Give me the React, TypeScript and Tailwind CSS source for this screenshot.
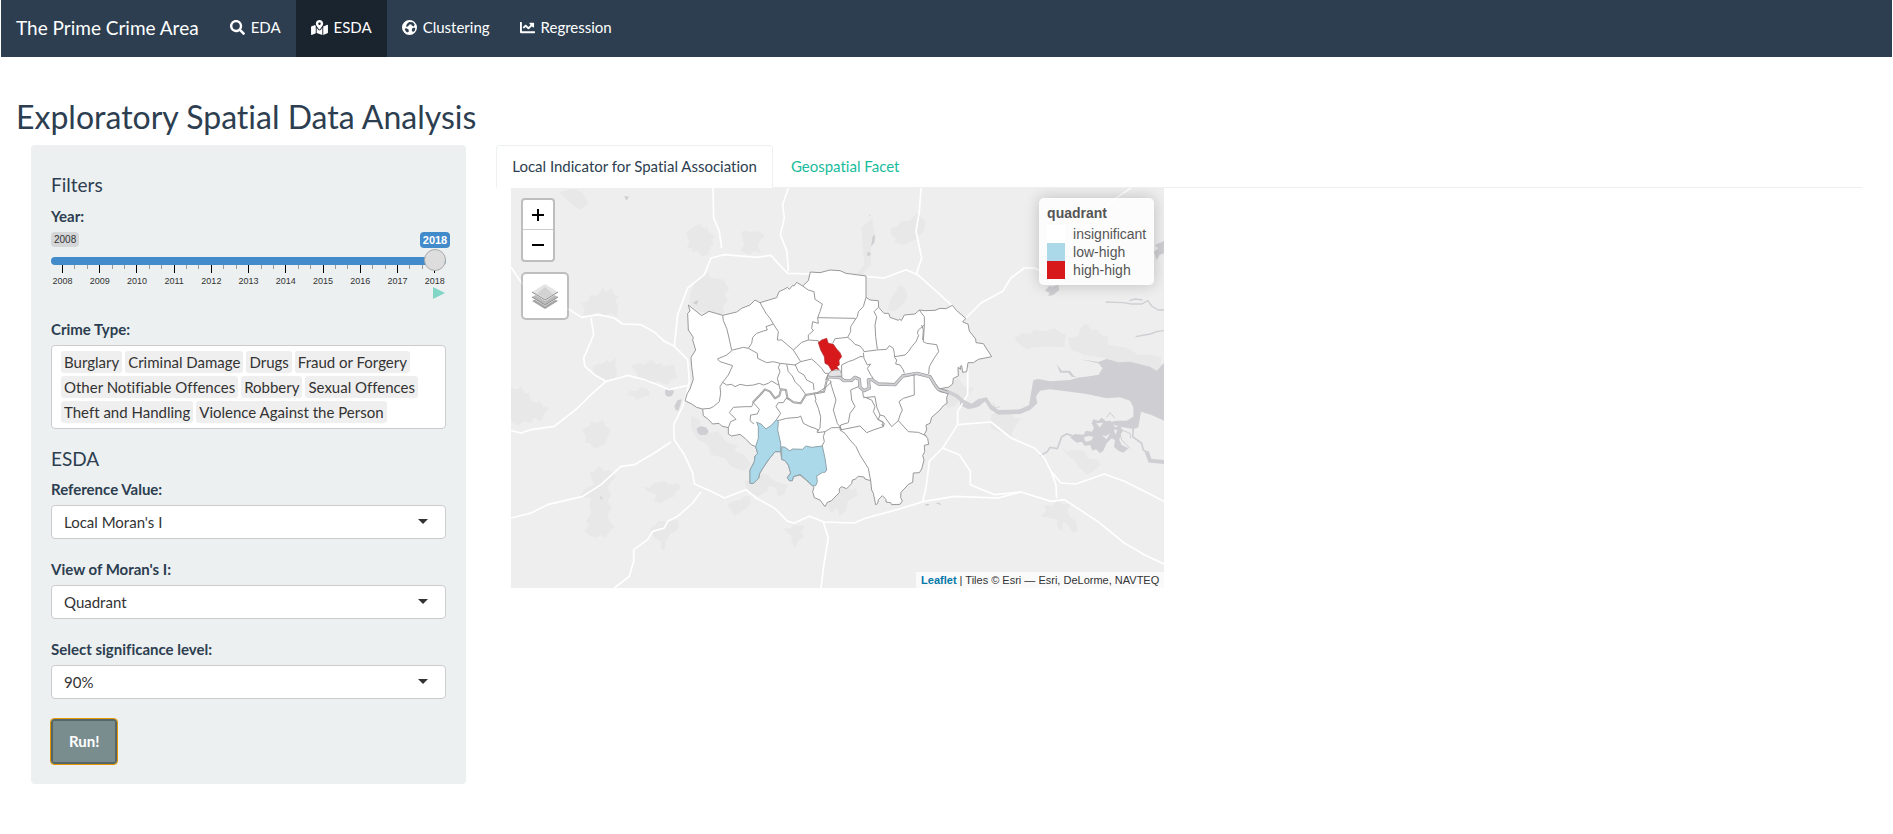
import { useState } from 'react'
import { FaChartLine, FaMapMarkedAlt, FaSearch } from 'react-icons/fa'

function GlobeIcon({ className }: { className?: string }) {
  return (
    <svg viewBox="0 0 46 46" fill="currentColor" fillRule="evenodd" className={className} aria-hidden="true">
      <path d="M23 0A23 23 0 1 1 23 46 23 23 0 0 1 23 0ZM12 20 15 12 22 6 33 7 39 14 36 20 30 17 28 13 23 14 20 18 16 21ZM8 27 14 25 20 29 21 35 16 38 11 34ZM31 26 37 23 41 26 39 33 34 37 30 33Z" />
    </svg>
  )
}

const NAV_ITEMS = [
  { label: 'EDA', icon: FaSearch, iconClass: 'w-[15px]' },
  { label: 'ESDA', icon: FaMapMarkedAlt, iconClass: 'w-[17px]' },
  { label: 'Clustering', icon: GlobeIcon, iconClass: 'w-[15px]' },
  { label: 'Regression', icon: FaChartLine, iconClass: 'w-[15px]' },
]

const YEARS = [2008, 2009, 2010, 2011, 2012, 2013, 2014, 2015, 2016, 2017, 2018]

const CRIME_TYPES = [
  'Burglary', 'Criminal Damage', 'Drugs', 'Fraud or Forgery', 'Other Notifiable Offences',
  'Robbery', 'Sexual Offences', 'Theft and Handling', 'Violence Against the Person',
]

const LEGEND = [
  { label: 'insignificant', swatch: 'bg-white' },
  { label: 'low-high', swatch: 'bg-[#abd9e9]' },
  { label: 'high-high', swatch: 'bg-[#d7191c]' },
]

// Map geometry, three units per pixel
const URBAN = [
  'M145 12 190 2 215 15 232 45 208 65 185 52Z',
  'M525 135 545 118 568 108 575 120 590 118 590 130 612 145 600 155 608 165 600 175 590 200 572 205 560 190 545 192 540 180 528 180 535 160Z',
  'M690 132 700 128 720 132 745 130 762 145 750 152 742 170 745 185 752 195 730 190 715 200 700 195 690 185 700 170Z',
  'M210 345 230 340 240 320 260 325 275 300 285 315 300 300 310 320 325 325 312 340 320 350 320 365 318 388 300 375 280 382 260 372 240 385 215 380 222 365Z',
  'M245 535 265 525 270 530 290 515 295 525 318 508 312 530 318 550 310 575 300 570 290 580 270 570 250 560Z',
  'M360 535 385 525 400 530 420 515 435 530 450 525 455 535 490 530 490 545 500 570 480 575 470 590 440 580 415 585 380 572 375 550Z',
  'M0 600 20 605 30 595 40 615 55 615 60 640 80 645 85 635 95 655 115 660 100 675 90 700 70 690 60 705 40 700 20 712 0 700Z',
  'M212 725 235 715 240 700 260 705 275 695 285 715 298 725 290 745 285 765 265 778 250 780 235 765 222 765 225 745Z',
  'M355 610 380 608 385 598 405 600 415 610 415 625 400 625 375 637 370 625 350 622Z',
  'M235 855 250 850 265 835 280 850 295 845 315 865 300 880 290 900 300 920 290 940 302 960 290 980 295 1000 310 1015 295 1030 285 1050 270 1040 255 1050 240 1045 220 1030 235 1010 225 1000 240 975 235 950 240 930 205 925 225 900 250 890Z',
  'M395 895 415 900 430 885 460 880 475 890 500 885 510 900 495 910 490 925 465 935 450 945 430 940 435 920 410 910Z',
  'M415 1020 430 1015 440 1000 470 1000 500 995 505 1015 495 1030 480 1035 465 1060 460 1090 450 1080 450 1060 430 1050Z',
  'M1140 120 1160 115 1170 100 1195 98 1220 75 1230 90 1245 100 1240 130 1225 140 1215 155 1200 160 1185 170 1150 165 1155 150 1140 140Z',
  'M1050 120 1085 90 1085 110 1095 150 1080 180 1080 230 1060 250 1050 340 1042 320 1045 290 1010 270 1000 260 1040 255 1060 230 1055 170Z',
  'M540 315 550 285 590 255 600 270 640 275 645 290 655 300 640 320 650 340 635 355 640 375 620 390 600 375 560 370 535 345Z',
  'M1130 365 1140 330 1155 310 1165 290 1180 300 1190 325 1180 345 1150 370Z',
  'M1510 450 1535 435 1560 438 1570 425 1600 430 1630 420 1645 432 1665 440 1660 478 1610 475 1560 480 1550 485 1520 465Z',
  'M1670 450 1700 445 1710 420 1725 405 1740 425 1760 425 1770 440 1790 445 1790 470 1850 480 1880 500 1920 500 1950 510 1950 545 1900 545 1850 540 1780 510 1720 500 1680 485Z',
  'M1310 660 1330 655 1345 640 1370 625 1390 600 1360 595 1340 570 1290 620 1300 640Z',
  'M1440 680 1460 672 1500 675 1510 690 1530 690 1510 720 1500 745 1460 730 1440 720Z',
  'M1650 780 1670 790 1690 785 1720 790 1730 810 1755 815 1770 830 1730 850 1700 835 1690 815 1680 810Z',
  'M540 680 570 700 560 720 600 735 620 730 650 765 680 770 670 790 700 800 720 830 700 850 660 835 640 810 600 800 590 770 560 755 540 720Z',
  'M730 850 770 860 790 880 830 890 820 920 800 925 795 900 765 890 750 910 735 890Z',
  'M650 950 665 940 690 935 700 925 715 925 720 945 700 965 670 985Z',
  'M700 880 740 870 770 890 770 910 740 925 710 910Z',
  'M940 940 965 930 980 900 1010 890 1020 910 1035 900 1040 920 1010 940 1005 970 985 985 980 960 960 975Z',
  'M815 1020 840 1022 850 1010 880 1015 870 1035 880 1045 860 1060 855 1080 840 1060 845 1045 830 1035Z',
  'M1590 985 1605 970 1600 950 1625 955 1640 935 1655 950 1680 945 1670 965 1675 985 1695 1000 1700 1030 1685 1035 1670 1010 1655 1000 1655 1030 1640 1020 1640 995Z',
  'M1690 815 1760 815 1760 840 1730 860 1705 840Z',
]

const ROADS = [
  'M0 238 32 285 175 365 212 388 260 380 310 390 335 408 390 410 430 432 460 460 490 475 530 515 535 580 525 625 515 655 488 710 490 755 520 800 545 855 550 888 600 910 640 930 705 905 735 930 790 960 830 1000 850 1005 895 985 940 1002 1030 1005 1065 990 1140 970 1240 940 1330 925 1460 930 1530 912 1620 940 1660 935 1760 1000 1840 1065 1900 1100 1959 1128',
  'M240 390 248 440 218 510 222 535 250 560 285 580 325 570 350 562 400 575 440 590 475 605 530 592',
  'M285 580 240 620 200 660 130 715 60 725 30 735 0 728',
  'M0 990 60 975 110 950 215 925 270 890 330 835 370 830 430 795 480 762',
  'M570 912 545 945 500 985 470 1000 460 1020 425 1030 410 1055 368 1085 368 1120 355 1165 310 1200',
  'M606 0 608 90 625 130 632 180M832 0 815 50 820 90 808 140 828 190 832 250',
  'M490 475 500 380 530 300 580 260 600 210 640 200 740 208 780 202 800 225 830 256 905 258 1025 262 1060 265 1120 270 1185 245 1220 260 1265 300 1320 350 1322 365',
  'M1230 0 1225 70 1215 130 1232 210 1215 262',
  'M1365 390 1410 345 1475 310 1500 270 1540 240 1570 240 1610 262 1680 200 1740 90 1830 20 1860 0',
  'M1370 540 1370 620 1340 670 1340 710 1295 780 1255 820 1245 900 1235 940',
  'M1340 710 1440 702 1500 750 1570 780 1600 810 1620 850 1650 885 1695 888 1780 858 1840 880 1900 910 1959 940',
  'M1295 780 1345 800 1378 850 1378 890 1450 920 1530 912M1620 850 1635 890 1637 930',
  'M937 1002 952 1050 940 1120 930 1200',
]

const OUTLINE =
  'M85 165 125 197 147 184 188 196 230 186 245 175 270 165 285 150 300 158 350 143 357 125 372 118 382 112 388 118 398 106 402 108 410 97 428 108 445 92 451 66 480 68 510 60 540 62 558 70 618 78 618 142 630 150 655 152 656 172 672 190 686 190 690 202 715 211 719 207 724 212 733 195 765 192 778 180 795 182 825 181 840 175 858 176 877 166 890 182 917 205 908 216 924 222 928 243 947 267 948 278 970 281 995 320 955 328 940 338 924 338 920 365 908 367 905 347 900 350 902 358 894 352 895 378 880 385 878 402 865 412 832 417 840 425 865 430 860 442 861 460 850 467 840 480 825 493 815 502 810 520 798 525 800 540 793 553 803 565 806 583 793 586 794 605 788 617 792 630 785 657 778 668 760 669 758 697 745 703 738 711 723 727 722 742 727 753 720 763 695 764 692 758 678 756 678 748 667 737 655 749 653 761 647 764 640 730 635 720 632 692 615 687 612 681 595 679 585 688 577 690 575 701 560 716 545 710 538 716 538 728 520 746 515 752 502 757 495 770 480 750 463 743 458 725 462 712 458 708 440 692 420 675 400 680 397 692 388 692 382 683 392 668 385 645 375 632 365 628 362 605 345 605 325 630 310 652 298 672 296 685 280 700 270 700 270 660 283 635 285 618 293 610 287 590 275 585 255 565 240 553 215 558 205 552 205 533 185 528 177 520 158 522 145 508 130 497 128 477 110 472 95 462 75 452 82 430 90 417 100 388 95 350 93 322 107 300 98 270 100 262 85 240 83 190 90 183Z'

const BORDERS = [
  'M188 196 190 212 200 235 205 255 215 300',
  'M172 327 200 315 218 300 250 292 265 295 275 280 278 262 290 250 310 243 322 240 318 230 340 222',
  'M300 158 318 190 330 205 340 222 355 245 352 270 365 270 400 300 422 335 405 345 360 340 340 335 320 338 293 325 292 310 265 295',
  'M172 327 180 335 218 347 205 375 188 397 180 410 182 430 178 455 160 470 150 475 128 477',
  'M188 397 200 405 215 403 225 410 240 403 260 407 280 405 298 400 310 405 325 400 335 393 350 402 357 405M360 342 355 352 360 365 352 385 357 405 360 418',
  'M428 108 445 120 462 125 465 148 487 162 480 185 473 203 475 220 458 215 455 235 460 242 445 255 445 270 425 277 400 300',
  'M473 203 585 205 587 210M618 142 610 170 595 185 592 200 585 210 572 230 572 245 563 262 575 272 585 283 600 288 610 300 612 305',
  'M445 270 475 272 480 285M563 262 525 266 518 280',
  'M655 172 642 185 650 200 645 225 647 260 652 298',
  'M612 305 650 300 680 298 688 287 700 295 703 310 704 322 710 330 707 342 720 345 730 360 733 370',
  'M778 180 785 190 793 200 793 225 775 240 772 250 776 256 768 275 755 290 745 305 735 315 704 320',
  'M793 225 790 275 800 280 830 284 836 305 822 325 808 350 806 372',
  'M785 225 790 240 788 270',
  'M610 308 612 325 622 345 632 342 622 355 632 375 640 385M545 382 545 345 565 335 580 330 600 320 610 320',
  'M422 335 455 327 470 340 485 355 495 370 505 370M380 343 385 365 397 378 405 395 420 410 437 433',
  'M405 343 415 365 432 375 440 390 460 400 462 420M515 362 505 370 500 390M470 430 500 410 515 395',
  'M205 533 212 515 228 508 208 488 220 472 255 470 275 470 280 458 298 478 292 492 272 495 270 512 282 522',
  'M353 512 380 505 415 502 422 498 430 520 450 530 465 535 475 540 472 548 495 545 490 560 493 575 485 590',
  'M350 508 362 490 348 470 355 458 370 458 378 445 388 448M465 450 475 475 482 500 480 535 470 545M463 430 468 450',
  'M510 390 515 410 528 450 520 480 532 520 545 538M495 545 515 533 540 533 545 540',
  'M595 410 572 420 575 450 585 470 570 490 565 518 542 525 540 540 600 528 620 548 645 538 670 530 668 515 655 510 640 485 645 470 635 450 610 440 608 425',
  'M610 443 645 440 650 470 660 495 672 498 695 530 715 512 720 495 727 480 717 455 730 445 763 435 762 372',
  'M715 512 745 545 775 547 800 558M540 540 555 550 570 570 588 590 600 615 625 655 632 692',
  'M660 495 655 508 673 520 670 530 665 522',
]

const THAMES_WEST =
  'M278 458 300 435 315 418 330 425 345 445 358 437 363 418 378 420 382 443 400 457 422 460 437 435 492 425 500 392'

const THAMES_EAST =
  'M500 392 505 380 540 383 552 392 575 391 585 382 598 388 600 412 612 422 628 415 625 390 635 388 655 402 705 404 728 378 770 370 810 380 825 405 835 418 864 427'

function LondonMap() {
  return (
    <svg viewBox="0 0 1959 1200" className="block w-full bg-[#eeeeee]" role="img" aria-label="London boroughs">
      <g fill="#e8e8e8">
        {URBAN.map((d) => <path key={d} d={d} />)}
      </g>

      {/* estuary, marshes and reservoirs */}
      <g transform="translate(1347 -24)" fill="#cfced3" stroke="none">
        <path d="M0 662 25 678 55 657 80 652 95 675 115 690 180 688 207 675 213 640 220 600 235 597 270 604 330 600 350 594 415 585 428 565 415 550 360 538 415 546 440 537 475 547 510 545 570 560 590 572 612 548V722L575 705 543 695 535 742 520 747 480 740 440 728 470 722 500 722 520 710 520 682 510 662 480 652 440 655 380 642 330 635 270 628 240 632 228 650 232 670 210 690 180 702 115 704 90 688 75 664 50 682 25 688 0 675Z" />
        <path d="M415 585 380 592 335 590 325 578 300 578 290 553 305 572 330 572 340 586 350 592 415 592Z" />
        <path fillRule="evenodd" d="M330 772 345 762 370 764 378 752 395 755 402 745 395 730 400 718 415 722 425 713 438 724 452 722 465 742 480 738 490 752 482 762 478 780 485 795 505 805 490 818 475 812 462 800 465 780 455 775 440 790 430 812 420 820 408 808 398 812 390 795 375 798 365 785 350 788ZM372 772 385 768 400 770 395 780 382 785 375 783ZM425 765 438 768 450 760 440 778ZM408 730 430 728 420 742ZM462 748 472 750 466 765Z" />
        <path d="M582 215 595 205 585 195 612 183V220L598 225 590 240ZM255 332 268 318 275 320 295 315 298 330 280 345 265 348 268 338Z" />
        <g fill="none" stroke="#cfced3" strokeWidth="5">
          <path d="M437 366 490 368 515 372 545 372 563 362 575 378 595 390 612 390M508 362 525 357 548 360M527 470 570 462 590 455 612 452" strokeWidth="4" />
          <path d="M240 827 262 815 270 802 292 806 305 770 320 762 345 770" />
          <path d="M520 745 518 770 545 790 550 810 565 820" />
          <path d="M560 815 570 842 612 846" strokeWidth="12" />
          <path d="M490 752 510 760 512 775M440 712 450 698 465 715M475 740 485 780 510 805" strokeWidth="3" />
          <path d="M100 670 106 684 120 680" strokeWidth="2" />
        </g>
      </g>
      <g fill="#cfced3">
        <path d="M462 608 468 602 485 602 489 612 482 624 470 626 463 620ZM490 654 500 636 512 634 508 650 502 668 494 666ZM557 722 568 714 585 718 593 730 586 740 568 741 560 734Z" />
        <path d="M1085 145 1092 140 1090 165 1080 175ZM1070 192 1080 195 1075 205 1068 202ZM1072 78 1080 84 1076 84ZM340 24 354 26 346 38ZM267 922 275 932 270 935ZM545 345 562 335 558 350ZM1240 948 1256 948 1250 954ZM1273 945 1286 944 1290 952Z" />
      </g>

      <g fill="none" stroke="#fff" strokeWidth="5" strokeLinejoin="round">
        {ROADS.map((d) => <path key={d} d={d} />)}
      </g>

      {/* boroughs */}
      <g transform="translate(447 186)" strokeLinejoin="round">
        <path d="M845 420 870 428 890 438 910 455 938 469 955 464 970 450" fill="none" stroke="#cfced3" strokeWidth="11" />
        <path d={OUTLINE} fill="#fff" stroke="#999" strokeWidth="3" />
        <path d={THAMES_WEST} fill="none" stroke="#999" strokeWidth="6" />
        <path d={THAMES_WEST} fill="none" stroke="#cfced3" strokeWidth="2" />
        <path d={THAMES_EAST} fill="none" stroke="#999" strokeWidth="10" />
        <path d={THAMES_EAST} fill="none" stroke="#cfced3" strokeWidth="6" />
        <g fill="none" stroke="#999" strokeWidth="3">
          {BORDERS.map((d) => <path key={d} d={d} />)}
        </g>
        <path d="M505 372 515 362 540 360 546 378 508 380Z" fill="#e4e4e6" stroke="#999" strokeWidth="2" />
        <g stroke="#8fa3ab" strokeWidth="3">
          <path fill="#abd9e9" d="M290 517 303 522 318 537 335 525 350 508 355 515 353 540 362 580 362 605 345 605 325 630 310 652 298 672 296 685 280 700 270 700 270 660 283 635 285 618 293 610 287 590 295 565 295 530Z" />
          <path fill="#abd9e9" d="M365 590 375 592 390 603 397 597 428 598 437 588 455 592 487 588 495 625 500 660 495 667 488 667 470 678 472 695 467 707 458 708 440 690 420 673 400 680 397 692 388 692 382 682 392 670 385 645 375 632 365 628Z" />
        </g>
        <path fill="#d7191c" stroke="#b0272a" strokeWidth="2" d="M475 278 485 270 500 265 505 280 520 283 530 297 540 308 545 320 537 330 538 345 530 350 537 358 527 357 515 362 505 345 495 340 493 320 482 300Z" />
      </g>
    </svg>
  )
}

function SelectField({ id, label, options }: { id: string; label: string; options: string[] }) {
  return (
    <div className="mb-5">
      <label htmlFor={id} className="mb-[5px] block font-bold">{label}</label>
      <div className="relative">
        <select
          id={id}
          className="block h-[34px] w-full appearance-none rounded border border-[#cccccc] bg-white px-3 text-[#333333]"
        >
          {options.map((option) => <option key={option}>{option}</option>)}
        </select>
        <span className="pointer-events-none absolute top-[14px] right-[18px] border-x-5 border-t-5 border-x-transparent border-t-[#333333]" />
      </div>
    </div>
  )
}

function YearSlider() {
  const [year, setYear] = useState(2018)

  return (
    <div className="mb-5 font-['Liberation_Sans',sans-serif]">
      <div className="-mr-1 flex items-start justify-between text-[10px] leading-[16px]">
        <span className="rounded bg-[#d4d6d7] px-[3px] leading-[15px] text-[#333333]">2008</span>
        <output htmlFor="year" className="rounded bg-[#428bca] px-[3px] text-[11px] font-bold text-white">{year}</output>
      </div>
      <input
        id="year"
        type="range"
        min={2008}
        max={2018}
        value={year}
        onChange={(e) => setYear(Number(e.target.value))}
        className="relative z-10 mt-0.5 block h-[22px] w-full appearance-none bg-transparent [&::-webkit-slider-runnable-track]:h-2 [&::-webkit-slider-runnable-track]:rounded [&::-webkit-slider-runnable-track]:bg-[#428bca] [&::-webkit-slider-thumb]:-mt-2 [&::-webkit-slider-thumb]:size-[22px] [&::-webkit-slider-thumb]:appearance-none [&::-webkit-slider-thumb]:rounded-full [&::-webkit-slider-thumb]:border [&::-webkit-slider-thumb]:border-[#aaaaaa] [&::-webkit-slider-thumb]:bg-[#dddddd]"
      />
      <div className="-mt-[7px] flex h-2 justify-between px-[11px]">
        {Array.from({ length: 31 }, (_, i) => (
          <span key={i} className={i % 3 === 0 ? 'h-2 w-px bg-black' : 'h-1 w-px bg-[#999999]'} />
        ))}
      </div>
      <div className="mt-[3px] flex justify-between px-[11px] text-[9px] leading-[11px] text-[#333333]">
        {YEARS.map((y) => (
          <span key={y} className="flex w-px justify-center">{y}</span>
        ))}
      </div>
      <button
        aria-label="Play"
        className="mr-px ml-auto block border-y-[6px] border-l-[12px] border-y-transparent border-l-[#82d6c6]"
      />
    </div>
  )
}

function LayersIcon() {
  return (
    <svg viewBox="0 0 26 26" className="size-[26px]">
      <path d="M13 11 26 18 13 26 0 18Z" fill="#a6a6a6" />
      <path d="M13 8 26 15 13 23 0 15Z" fill="#fff" />
      <path d="M13 7 26 14 13 22 0 14Z" fill="#b9b9b9" />
      <path d="M0 14 13 22 26 14" fill="none" stroke="#8c8c8c" />
      <path d="M13 2 26 10 13 18 0 10Z" fill="#fff" />
      <path d="M13 1 26 9 13 17 0 9Z" fill="#e4e4e4" />
      <path d="M13 4 21 11 13 16 5 11Z" fill="#d2d2d2" />
      <path d="M0 9 13 17 26 9" fill="none" stroke="#8c8c8c" />
    </svg>
  )
}

function MapPanel() {
  return (
    <div className="relative w-full max-w-[653px] overflow-hidden font-['Liberation_Sans',sans-serif]">
      <LondonMap />

      {/* Map controls */}
      <div className="absolute top-[10px] left-[10px] flex flex-col items-start gap-[10px]">
        <div className="flex flex-col rounded border-2 border-black/20 bg-white bg-clip-padding text-black">
          <button aria-label="Zoom in" className="flex h-[30px] w-[30px] items-center justify-center border-b border-[#cccccc]">
            <svg viewBox="0 0 12 12" className="size-3"><path d="M6 0V12M0 6H12" stroke="currentColor" strokeWidth="2" /></svg>
          </button>
          <button aria-label="Zoom out" className="flex h-[30px] w-[30px] items-center justify-center">
            <svg viewBox="0 0 12 12" className="size-3"><path d="M0 6H12" stroke="currentColor" strokeWidth="2" /></svg>
          </button>
        </div>
        <button aria-label="Layers" className="flex size-12 items-center justify-center rounded-[5px] border-2 border-black/20 bg-white bg-clip-padding">
          <LayersIcon />
        </button>
      </div>

      <div className="absolute top-[10px] right-[10px] rounded-[5px] bg-white/80 px-2 py-1.5 text-sm leading-[18px] text-[#555555] shadow-[0_0_15px_rgba(0,0,0,0.2)]">
        <p className="mb-[3px] font-bold">quadrant</p>
        <ul>
          {LEGEND.map(({ label, swatch }) => (
            <li key={label} className="flex gap-2">
              <span className={`size-[18px] ${swatch}`} />
              {label}
            </li>
          ))}
        </ul>
      </div>

      <p className="absolute right-0 bottom-0 bg-white/70 px-[5px] text-[11px] leading-[16px] text-[#333333]">
        <a href="#leaflet" className="font-bold text-[#0078a8]">Leaflet</a> | Tiles © Esri — Esri, DeLorme, NAVTEQ
      </p>
    </div>
  )
}

export default function App() {
  return (
    <div className="font-[Lato,sans-serif] text-[15px] leading-[21px] text-[#2c3e50] [font-variant-ligatures:none]">
      <nav className="mx-px flex gap-px bg-[#2c3e50] text-white">
        <a href="#home" className="px-[15px] pt-[18px] pb-[19px] text-[19px] leading-[20px]">The Prime Crime Area</a>
        <ul className="flex">
          {NAV_ITEMS.map(({ label, icon: Icon, iconClass }) => (
            <li key={label}>
              <a
                href={`#${label.toLowerCase()}`}
                className={`flex h-full items-center gap-1.5 px-[15px] pb-[3px] ${label === 'ESDA' ? 'bg-[#1a242f]' : ''}`}
              >
                <Icon className={`h-[15px] ${iconClass}`} />
                {label}
              </a>
            </li>
          ))}
        </ul>
      </nav>

      <main className="px-4">
        <h1 className="mt-[42px] mb-[11px] text-[32px] leading-[35px]">Exploratory Spatial Data Analysis</h1>

        <div className="grid grid-cols-4 items-start gap-[30px] px-[15px]">
          <form className="rounded bg-[#ecf0f1] p-5" onSubmit={(e) => e.preventDefault()}>
            <h2 className="mt-[9px] mb-[11px] text-[19px]">Filters</h2>
            <label htmlFor="year" className="mb-[5px] block font-bold">Year:</label>
            <YearSlider />

            <label htmlFor="crime-type" className="mb-[5px] block font-bold">Crime Type:</label>
            <div className="flex flex-wrap gap-[3px] rounded border border-[#cccccc] bg-white px-[9px] py-[5px] text-[#333333]">
              {CRIME_TYPES.map((type) => (
                <span key={type} className="rounded-[3px] bg-[#efefef] px-[3px] leading-[22px]">{type}</span>
              ))}
              <input id="crime-type" className="w-1 outline-none" />
            </div>

            <h2 className="mt-[19px] mb-[10px] text-[19px]">ESDA</h2>
            <SelectField id="reference" label="Reference Value:" options={["Local Moran's I"]} />
            <SelectField id="view" label="View of Moran's I:" options={['Quadrant']} />
            <SelectField id="significance" label="Select significance level:" options={['90%']} />
            <button className="block h-[45px] rounded-[3px] border-2 border-[#566566] bg-[#798d8f] px-4 font-bold text-white outline-1 outline-[#e59700]">
              Run!
            </button>
          </form>

          <section className="col-span-3">
            <div className="flex gap-0.5 border-b border-[#ecf0f1]">
              <a href="#lisa" className="-mb-px rounded-t border border-[#ecf0f1] border-b-white bg-white px-[15px] py-[10px]">
                Local Indicator for Spatial Association
              </a>
              <a href="#facet" className="-mb-px border border-transparent px-[15px] py-[10px] text-[#18bc9c]">Geospatial Facet</a>
            </div>
            <div className="px-[15px]">
              <MapPanel />
            </div>
          </section>
        </div>
      </main>
    </div>
  )
}
